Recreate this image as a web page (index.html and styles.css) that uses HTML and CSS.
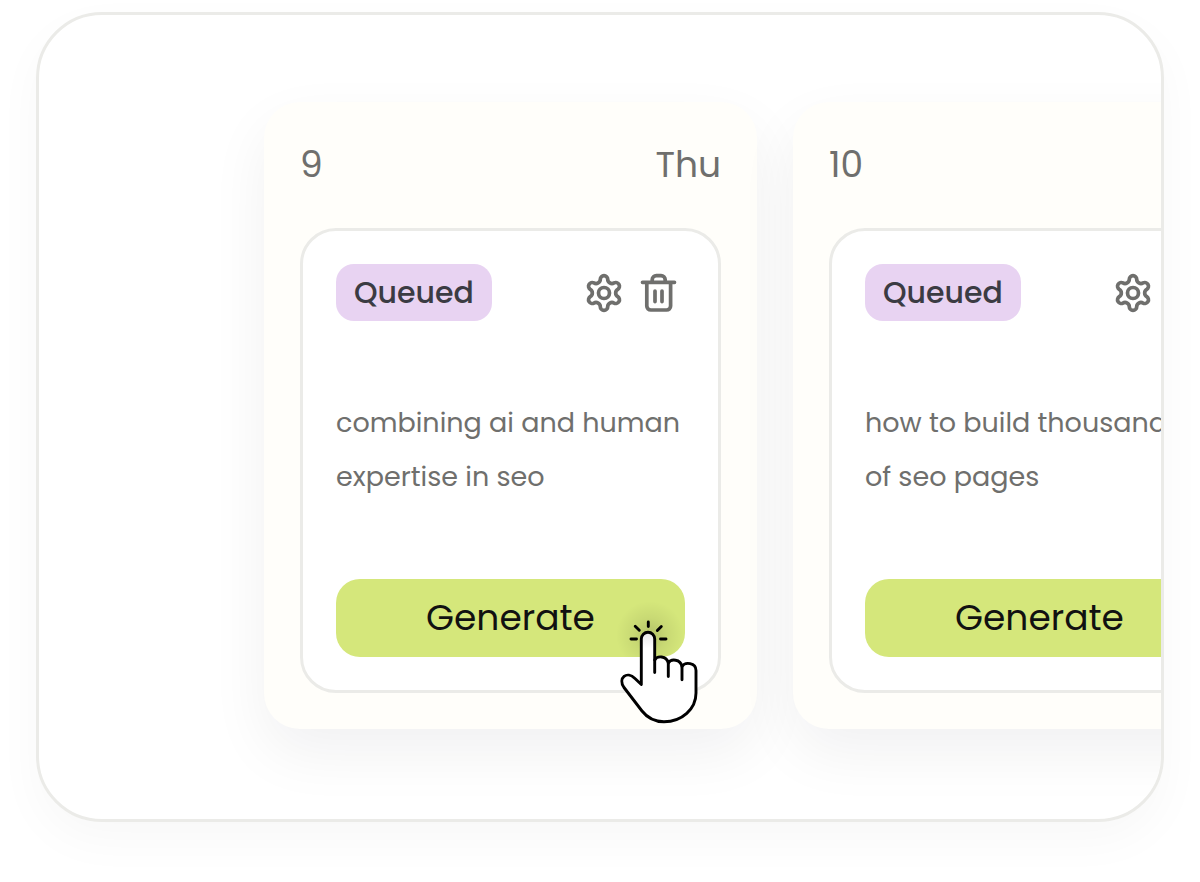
FILE: index.html
```
<!DOCTYPE html>
<html lang="en">
<head>
  <meta charset="UTF-8">
  <title>Content Planner</title>
  <link rel="stylesheet" href="styles.css">
</head>
<body>
  <!-- shared icons -->
  <svg class="sprite" aria-hidden="true">
    <symbol id="gear" viewBox="0 0 40 40">
      <path d="M16.3 6.3A3.7 3.7 0 0 1 23.7 6.3C23.7 9.5 27.3 11.6 30.05 9.95A3.7 3.7 0 0 1 33.75 16.35C31 17.95 31 22.05 33.75 23.65A3.7 3.7 0 0 1 30.05 30.05C27.3 28.4 23.7 30.5 23.7 33.7A3.7 3.7 0 0 1 16.3 33.7C16.3 30.5 12.7 28.4 9.95 30.05A3.7 3.7 0 0 1 6.25 23.65C9 22.05 9 17.95 6.25 16.35A3.7 3.7 0 0 1 9.95 9.95C12.7 11.6 16.3 9.5 16.3 6.3Z"/>
      <circle cx="20" cy="20" r="5.5"/>
    </symbol>
    <symbol id="trash" viewBox="0 0 40 40">
      <path d="M4.5 9.3H36.5M8.8 9.3V33a4 4 0 0 0 4 4H28.6a4 4 0 0 0 4-4V9.3M14.2 9.3V6.8a4.2 4.2 0 0 1 4.2-4.2H23a4.2 4.2 0 0 1 4.2 4.2V9.3M17 18V28.6M24 18V28.6"/>
    </symbol>
  </svg>

  <main class="board">
    <section class="day">
      <header class="day-header">
        <span>9</span>
        <span>Thu</span>
      </header>
      <article class="card">
        <div class="card-top">
          <span class="badge">Queued</span>
          <div class="actions">
            <button class="icon-btn" aria-label="Settings"><svg><use href="#gear"/></svg></button>
            <button class="icon-btn" aria-label="Delete"><svg><use href="#trash"/></svg></button>
          </div>
        </div>
        <p class="keyword">combining ai and human<br>expertise in seo</p>
        <button class="generate">Generate</button>
        <svg class="pointer" viewBox="15 10 90 120" aria-hidden="true">
          <defs>
            <radialGradient id="glow">
              <stop offset="0" stop-color="#000" stop-opacity=".16"/>
              <stop offset=".5" stop-color="#000" stop-opacity=".06"/>
              <stop offset="1" stop-color="#000" stop-opacity="0"/>
            </radialGradient>
            <linearGradient id="skin" x1="0" y1="0" x2="0" y2="1">
              <stop offset="0" stop-color="#e6e6e6"/>
              <stop offset=".18" stop-color="#fff"/>
            </linearGradient>
            <clipPath id="on-button">
              <path d="M0 -21H61A24 24 0 0 1 85 3V33A24 24 0 0 1 61 57H0Z"/>
            </clipPath>
          </defs>
          <circle cx="50" cy="35" r="34" fill="url(#glow)" clip-path="url(#on-button)"/>
          <path fill="url(#skin)" d="M41.3 84.5V39a6.7 6.7 0 0 1 13.4 0V60C57 55.5 66.5 55.5 68.3 63C71 58.5 80.5 59 82 66.5C85 61.5 96 62.5 96 70.5V93C96 109 82 121.7 64 121.7C55 121.7 47.5 118 42 111L24 87.5C17.5 78 27 70.5 35 78.5Z"/>
          <path fill="none" d="M54.7 60V72.5M68.3 63V76.5M82 66.5V79.7"/>
          <path fill="none" d="M48.3 22V26.5M31 39H36.5M60.5 39H66M35.2 26.3L39.3 30.3M61.3 26.5L57.3 30.5"/>
        </svg>
      </article>
    </section>

    <section class="day">
      <header class="day-header">
        <span>10</span>
      </header>
      <article class="card">
        <div class="card-top">
          <span class="badge">Queued</span>
          <div class="actions">
            <button class="icon-btn" aria-label="Settings"><svg><use href="#gear"/></svg></button>
            <button class="icon-btn" aria-label="Delete"><svg><use href="#trash"/></svg></button>
          </div>
        </div>
        <p class="keyword">how to build thousands<br>of seo pages</p>
        <button class="generate">Generate</button>
      </article>
    </section>
  </main>
</body>
</html>
```
FILE: styles.css
```
* {
  box-sizing: border-box;
}

body {
  margin: 0;
  min-height: 100vh;
  padding: 12px 36px 60px;
  font-family: Poppins, Inter, sans-serif;
  background: #fff;
  color: #6f6f6d;
}

button {
  font: inherit;
  border: none;
  padding: 0;
  cursor: pointer;
}

.sprite {
  position: absolute;
  width: 0;
  height: 0;
}

.board {
  display: flex;
  gap: 36px;
  padding: 87px 0 90px 225px;
  border: 3px solid #ebebe8;
  border-radius: 66px;
  overflow: hidden;
  box-shadow: 0 18px 48px rgba(0, 0, 0, 0.03);
}

.day {
  flex: none;
  width: 493px;
  padding: 36px;
  border-radius: 36px;
  background: #fffefa;
  box-shadow: 0 24px 60px rgba(10, 10, 30, 0.06);
}

.day-header {
  display: flex;
  justify-content: space-between;
  margin-bottom: 36px;
  font-size: 36px;
  line-height: 54px;
}

.card {
  position: relative;
  padding: 33px;
  border: 3px solid #ebebe8;
  border-radius: 36px;
  background: #fff;
}

.card-top {
  display: flex;
  justify-content: space-between;
  align-items: center;
}

.badge {
  padding: 0 18px;
  border-radius: 18px;
  background: #e8d3f2;
  color: #3b3b43;
  font-size: 30px;
  font-weight: 500;
  line-height: 57px;
}

.actions {
  display: flex;
  gap: 14px;
  padding-right: 7px;
}

.icon-btn {
  width: 40px;
  height: 40px;
  background: none;
  color: inherit;
}

.icon-btn svg {
  display: block;
  width: 40px;
  height: 40px;
  fill: none;
  stroke: currentColor;
  stroke-width: 3.7;
  stroke-linecap: round;
  stroke-linejoin: round;
}

.keyword {
  margin: 75px 0;
  font-size: 27px;
  line-height: 54px;
  white-space: nowrap;
}

.generate {
  display: block;
  width: 100%;
  border-radius: 24px;
  background: #d5e77b;
  color: #111;
  font-size: 36px;
  line-height: 78px;
}

/* hand pointer over the corner of the button */
.pointer {
  position: absolute;
  right: 13px;
  bottom: -40px;
  width: 90px;
  height: 120px;
  overflow: visible;
  stroke: #000;
  stroke-width: 2.9;
  stroke-linecap: round;
  stroke-linejoin: round;
  pointer-events: none;
}

.pointer circle {
  stroke: none;
}
```
